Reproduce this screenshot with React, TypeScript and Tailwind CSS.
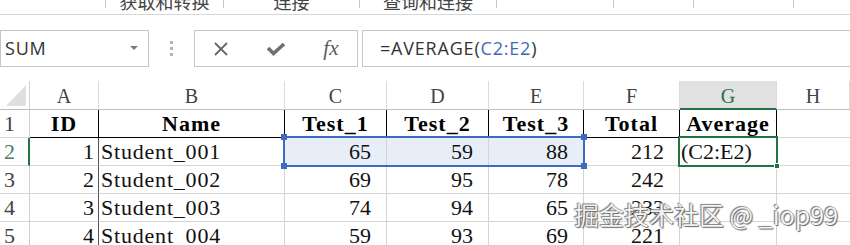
import React from 'react';

const widths = ['w-[30px]', 'w-[69px]', 'w-[186px]', 'w-[102px]', 'w-[102px]', 'w-[95px]', 'w-[96px]', 'w-[97px]', 'flex-1'];
const letters = ['A', 'B', 'C', 'D', 'E', 'F', 'G', 'H'];
const heads = ['ID', 'Name', 'Test_1', 'Test_2', 'Test_3', 'Total', 'Average'];

const data: [number, string, number, number, number, number][] = [
  [1, 'Student_001', 65, 59, 88, 212],
  [2, 'Student_002', 69, 95, 78, 242],
  [3, 'Student_003', 74, 94, 65, 233],
  [4, 'Student_004', 59, 93, 69, 221],
];

const App: React.FC = () => {
  return (
    <div className="relative w-[850px] h-[245px] overflow-hidden bg-white text-[#222]">
      {/* Ribbon group labels (cut off) */}
      <div className="h-[15px] border-b border-[#d6d6d6] overflow-hidden font-['Noto_Sans_CJK_SC',sans-serif] text-[18px] text-[#444]">
        <div className="flex h-[8px]">
          <div className="w-[106px] border-r border-[#c6c6c6]" />
          <div className="w-[118px] border-r border-[#c6c6c6] flex justify-center">
            <span className="leading-[18px] -mt-[8px]">获取和转换</span>
          </div>
          <div className="w-[136px] border-r border-[#c6c6c6] flex justify-center">
            <span className="leading-[18px] -mt-[8px]">连接</span>
          </div>
          <div className="w-[137px] border-r border-[#c6c6c6] flex justify-center">
            <span className="leading-[18px] -mt-[8px]">查询和连接</span>
          </div>
          <div className="w-[117px] border-r border-[#c6c6c6]" />
          <div className="w-[80px] border-r border-[#c6c6c6]" />
          <div className="w-[100px] border-r border-[#c6c6c6]" />
          <div className="flex-1" />
        </div>
      </div>

      {/* Formula bar */}
      <div className="mt-[15px] flex h-[37px] font-['Open_Sans',sans-serif]">
        <div className="w-[149px] border border-[#c6c6c6] flex items-center justify-between pl-[4px] pr-[10px]">
          <span className="text-[18px] tracking-[0.8px] text-[#333]">SUM</span>
          <svg width="8" height="5" viewBox="0 0 8 5">
            <path d="M0 0 L8 0 L4 4 Z" fill="#7a7a7a" />
          </svg>
        </div>
        <div className="w-[45px] flex items-center justify-center">
          <div className="flex flex-col gap-[3px]">
            <div className="w-[3px] h-[3px] bg-[#b4b4b4]" />
            <div className="w-[3px] h-[3px] bg-[#b4b4b4]" />
            <div className="w-[3px] h-[3px] bg-[#b4b4b4]" />
          </div>
        </div>
        <div className="w-[164px] border border-[#c6c6c6] flex items-center justify-around">
          <svg width="16" height="14" viewBox="0 0 16 14">
            <path d="M2 1 L14 13 M14 1 L2 13" stroke="#666" strokeWidth="1.8" fill="none" />
          </svg>
          <svg width="20" height="14" viewBox="0 0 20 14">
            <path d="M2 6 L7.5 11.5 L18 2" stroke="#707070" strokeWidth="3.6" fill="none" strokeLinejoin="miter" />
          </svg>
          <span className="font-['Liberation_Serif',serif] italic text-[21px] text-[#5a5a5a] leading-none">fx</span>
        </div>
        <div className="ml-[4px] flex-1 border-y border-l border-[#c6c6c6] flex items-center pl-[17px] text-[18px] tracking-[0.8px] text-[#333]">
          <span>=AVERAGE(</span>
          <span className="text-[#3e6bb8]">C2:E2</span>
          <span>)</span>
        </div>
      </div>

      {/* Grid */}
      <div className="relative mt-[14px] font-['Liberation_Serif',serif]">
        {/* column headers */}
        <div className="flex h-[29px]">
          <div className={`${widths[0]} border-r border-r-[#cfcfcf] border-b border-b-[#bdbdbd] flex items-end justify-end pr-[3px] pb-[3px]`}>
            <svg width="20" height="21" viewBox="0 0 20 21">
              <path d="M20 0 L20 21 L0 21 Z" fill="#dfdfdf" />
            </svg>
          </div>
          {letters.map((l, i) =>
            l === 'G' ? (
              <div key={l} className={`${widths[i + 1]} bg-[#e1e1e1] border-r border-r-[#dcdcdc] border-b-2 border-b-[#217346] text-center text-[20px] leading-[31px] text-[#217346]`}>
                {l}
              </div>
            ) : (
              <div key={l} className={`${widths[i + 1]} border-r border-r-[#dcdcdc] border-b border-b-[#bdbdbd] text-center text-[20px] leading-[31px] text-[#444]`}>
                {l}
              </div>
            )
          )}
        </div>

        {/* row 1 */}
        <div className="flex h-[28px] text-[22px] leading-[28px]">
          <div className={`${widths[0]} border-r border-r-[#cfcfcf] border-b border-b-[#d4d4d4] pl-[4px] text-[#444]`}>1</div>
          {heads.map((h, i) => (
            <div key={h} className={`${widths[i + 1]} border-r border-r-black border-b border-b-black text-center font-bold tracking-[1px] text-black`}>
              {h}
            </div>
          ))}
          <div className="flex-1 border-b border-b-[#d4d4d4]" />
        </div>

        {/* data rows */}
        {data.map((r, ri) => (
          <div key={r[0]} className="flex h-[28px] text-[22px] leading-[28px] text-[#111]">
            {ri === 0 ? (
              <div className={`${widths[0]} border-r-2 border-r-[#217346] border-b border-b-[#d4d4d4] pl-[4px] text-[#4b7a60]`}>{ri + 2}</div>
            ) : (
              <div className={`${widths[0]} border-r border-r-[#cfcfcf] border-b border-b-[#d4d4d4] pl-[4px] text-[#444]`}>{ri + 2}</div>
            )}
            <div className={`${widths[1]} border-r border-r-[#555] border-b border-b-[#d4d4d4] text-right pr-[4px]`}>{r[0]}</div>
            <div className={`${widths[2]} border-r border-r-[#d4d4d4] border-b border-b-[#d4d4d4] pl-[2px] tracking-[0.8px]`}>{r[1]}</div>
            {[r[2], r[3], r[4]].map((v, ci) => (
              <div
                key={ci}
                className={`${widths[ci + 3]} border-r border-r-[#d4d4d4] border-b border-b-[#d4d4d4] text-right pr-[15px] ${ri === 0 ? 'bg-[#e8eef8]' : ''}`}
              >
                {v}
              </div>
            ))}
            <div className={`${widths[6]} border-r border-r-[#d4d4d4] border-b border-b-[#d4d4d4] text-right pr-[15px]`}>{r[5]}</div>
            <div className={`${widths[7]} border-r border-r-[#d4d4d4] border-b border-b-[#d4d4d4] pl-[1px] overflow-hidden whitespace-nowrap`}>
              {ri === 0 ? '(C2:E2)' : ''}
            </div>
            <div className="flex-1 border-b border-b-[#d4d4d4]" />
          </div>
        ))}

        {/* selection C2:E2 */}
        <div className="absolute left-[283px] top-[55px] w-[302px] h-[31px] border-2 border-[#3e6bc0]">
          <div className="absolute -left-[4px] -top-[4px] w-[6px] h-[6px] bg-[#3e6bc0]" />
          <div className="absolute -left-[4px] -bottom-[4px] w-[6px] h-[6px] bg-[#3e6bc0]" />
          <div className="absolute -right-[4px] -top-[4px] w-[6px] h-[6px] bg-[#3e6bc0]" />
          <div className="absolute -right-[4px] -bottom-[4px] w-[6px] h-[6px] bg-[#3e6bc0]" />
        </div>

        {/* active cell G2 */}
        <div className="absolute left-[678px] top-[55px] w-[100px] h-[31px] border-2 border-[#217346]">
          <div className="absolute -right-[4px] -bottom-[4px] w-[6px] h-[6px] bg-[#217346] border border-white" />
        </div>
      </div>

      {/* watermark */}
      <div className="absolute left-[574px] top-[199px] font-['Noto_Sans_CJK_SC',sans-serif] text-[25px] leading-[30px] text-[#f4f4f4] whitespace-nowrap [text-shadow:0_0_1px_#555,1px_1px_1px_#666,-1px_-1px_1px_#888]">
        掘金技术社区 @ _iop99
      </div>
    </div>
  );
};

export default App;
